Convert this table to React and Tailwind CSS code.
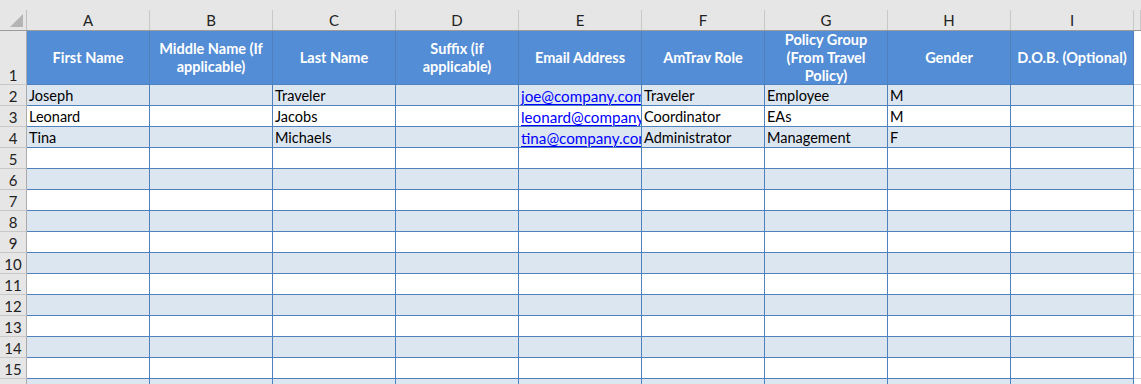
import React from "react";

const letters = ["A", "B", "C", "D", "E", "F", "G", "H", "I"];
const headers = [
  ["First Name"],
  ["Middle Name (If", "applicable)"],
  ["Last Name"],
  ["Suffix (if", "applicable)"],
  ["Email Address"],
  ["AmTrav Role"],
  ["Policy Group", "(From Travel", "Policy)"],
  ["Gender"],
  ["D.O.B. (Optional)"],
];
const data = [
  ["Joseph", "", "Traveler", "", "joe@company.com", "Traveler", "Employee", "M", ""],
  ["Leonard", "", "Jacobs", "", "leonard@company.com", "Coordinator", "EAs", "M", ""],
  ["Tina", "", "Michaels", "", "tina@company.com", "Administrator", "Management", "F", ""],
];

export default function App() {
  const rows = [];
  for (let r = 2; r <= 16; r++) {
    const vals = data[r - 2] || Array(9).fill("");
    const band = r % 2 === 0;
    rows.push(
      <div key={r} className="flex h-[21px] shrink-0">
        <div className="flex h-full w-[27px] shrink-0 items-end justify-center border-r border-b border-r-[#ababab] border-b-[#c8c8c8] bg-[#e6e6e6] text-[15px] leading-[18px] text-[#222]">
          {r}
        </div>
        {vals.map((v, i) => (
          <div
            key={i}
            className={
              "flex h-full w-[123px] shrink-0 items-end overflow-hidden whitespace-nowrap border-r border-b border-[#4f81bd] pl-[2px] leading-[18px] " +
              (band ? "bg-[#dce6f1]" : "bg-white")
            }
          >
            {i === 4 && v ? (
              <span className="text-[15.2px] text-[#0000ff] underline decoration-1 underline-offset-2">{v}</span>
            ) : (
              <span className="text-black">{v}</span>
            )}
          </div>
        ))}
        <div className="h-full flex-1 border-b border-[#d4d4d4] bg-white" />
      </div>
    );
  }

  return (
    <div className="h-[384px] w-[1141px] overflow-hidden bg-white font-['Lato',sans-serif] text-[14.5px]">
      <div className="h-[10px] bg-[#e6e6e6]" />
      <div className="flex h-[21px] border-b border-[#9b9b9b] bg-[#e6e6e6]">
        <div className="flex h-full w-[27px] shrink-0 items-end justify-end border-r border-[#bfbfbf] pr-[3px] pb-[3px]">
          <svg width="13" height="13" viewBox="0 0 13 13">
            <polygon points="13,0 13,13 0,13" fill="#b4b4b4" />
          </svg>
        </div>
        {letters.map((l) => (
          <div
            key={l}
            className="flex h-full w-[123px] shrink-0 items-center justify-center border-r border-[#c8c8c8] pt-[1px] text-[15px] text-[#222]"
          >
            {l}
          </div>
        ))}
        <div className="h-full flex-1 border-r border-[#c8c8c8]" />
      </div>
      <div className="flex h-[54px]">
        <div className="flex h-full w-[27px] shrink-0 items-end justify-center border-r border-b border-r-[#ababab] border-b-[#c8c8c8] bg-[#e6e6e6] text-[15px] leading-[18px] text-[#222]">
          1
        </div>
        {headers.map((h, i) => (
          <div
            key={i}
            className="flex h-full w-[123px] shrink-0 flex-col items-center justify-center border-r border-b border-[#4f81bd] bg-[#538dd5] text-center font-bold leading-[18px] text-white"
          >
            {h.map((line, j) => (
              <span key={j}>{line}</span>
            ))}
          </div>
        ))}
        <div className="h-full flex-1 border-b border-[#d4d4d4] bg-white" />
      </div>
      {rows}
    </div>
  );
}
